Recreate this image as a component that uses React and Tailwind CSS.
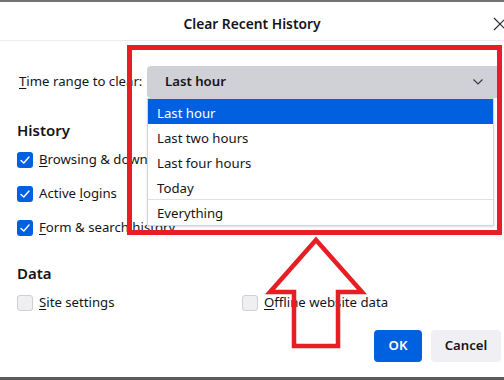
import { useState } from 'react';

const Check = ({ checked }) => (
  <span
    className={`w-[16px] h-[16px] rounded-[3px] flex items-center justify-center shrink-0 ${
      checked ? 'bg-[#0060df]' : 'bg-[#efeff2] border border-[#cfcfd4]'
    }`}
  >
    {checked && (
      <svg width="12" height="12" viewBox="0 0 12 12" fill="none">
        <path d="M2 6.4 L4.8 9 L10 3" stroke="white" strokeWidth="1.4" strokeLinecap="round" strokeLinejoin="round" />
      </svg>
    )}
  </span>
);

// one char underlined as the access key
const Key = ({ text, at = 0 }) => (
  <span>
    {text.slice(0, at)}
    <span className="underline underline-offset-2">{text[at]}</span>
    {text.slice(at + 1)}
  </span>
);

const Row = ({ checked, children }) => (
  <div className="flex items-center gap-[6px] h-[20px]">
    <Check checked={checked} />
    <span className="whitespace-nowrap">{children}</span>
  </div>
);

const ranges = ['Last hour', 'Last two hours', 'Last four hours', 'Today'];

export default function App() {
  const [range] = useState('Last hour');

  return (
    <div className="relative w-[504px] h-[380px] overflow-hidden bg-white flex flex-col text-[13.2px] text-[#15141a] font-['Noto_Sans',sans-serif]">
      <div className="h-[2px] bg-[#727272]" />

      <div className="relative h-[38px] pt-[6px] flex items-center justify-center">
        <span className="font-semibold text-[13.8px]">Clear Recent History</span>
        <svg className="absolute left-[493px] top-[15px]" width="14" height="14" viewBox="0 0 14 14">
          <path d="M1 1 L13 13 M13 1 L1 13" stroke="#2b2a33" strokeWidth="1.2" />
        </svg>
      </div>
      <div className="h-px bg-[#ececee]" />

      <div className="pl-[17px] pr-[3px] flex flex-col">
        <div className="mt-[25px] flex items-center h-[32px]">
          <span className="w-[130px] pl-[2px] whitespace-nowrap">
            <Key text="Time range to clear:" />
          </span>
          <div className="relative flex-1 h-[32px] rounded-[4px] bg-[#d0d0d7] pl-[18px] pr-[17px] flex items-center justify-between">
            <span className="font-semibold">{range}</span>
            <svg width="12" height="8" viewBox="0 0 12 8" fill="none">
              <path d="M1.5 1.5 L6 6 L10.5 1.5" stroke="#3a3944" strokeWidth="1.2" />
            </svg>

            <div className="absolute left-0 right-[7px] top-full bg-white border border-[#d4d4d8] shadow-sm flex flex-col">
              {ranges.map((r) => (
                <div
                  key={r}
                  className={`h-[25px] pl-[9px] pt-[4px] flex items-center ${
                    r === range ? 'bg-[#0060df] text-white' : ''
                  }`}
                >
                  {r}
                </div>
              ))}
              <div className="h-px bg-[#e0e0e2]" />
              <div className="h-[25px] pl-[9px] pt-[3px] flex items-center">Everything</div>
            </div>
          </div>
        </div>

        <div className="mt-[22px] h-[20px] flex items-center font-semibold text-[15px]">History</div>
        <div className="mt-[10px] flex flex-col gap-[14px]">
          <Row checked>
            <Key text="Browsing & download history" />
          </Row>
          <Row checked>
            <Key text="Active logins" at={7} />
          </Row>
          <Row checked>
            <Key text="Form & search history" />
          </Row>
        </div>

        <div className="mt-[25px] h-[20px] flex items-center font-semibold text-[15px]">Data</div>
        <div className="mt-[10px] grid grid-cols-[225px_1fr]">
          <Row>
            <Key text="Site settings" />
          </Row>
          <Row>
            <Key text="Offline website data" />
          </Row>
        </div>

        <div className="mt-[17px] flex justify-end gap-[9px]">
          <button className="w-[48px] h-[32px] rounded-[4px] bg-[#0061e0] text-white font-semibold">OK</button>
          <button className="w-[70px] h-[32px] rounded-[4px] bg-[#f0f0f4] font-semibold">Cancel</button>
        </div>
      </div>

      <div className="mt-auto h-[3px] bg-[#5c5c5c]" />

      {/* annotation: red frame and arrow */}
      <div className="absolute left-[127px] top-[45px] w-[375px] h-[190px] border-[5px] border-[#e81e25] pointer-events-none" />
      <svg className="absolute left-0 top-0 pointer-events-none" width="504" height="380">
        <path
          d="M316 240 L362 292 L338 292 L338 346 L294 346 L294 292 L270 292 Z"
          fill="none"
          stroke="#e81e25"
          strokeWidth="4.5"
          strokeLinejoin="miter"
        />
      </svg>
    </div>
  );
}
